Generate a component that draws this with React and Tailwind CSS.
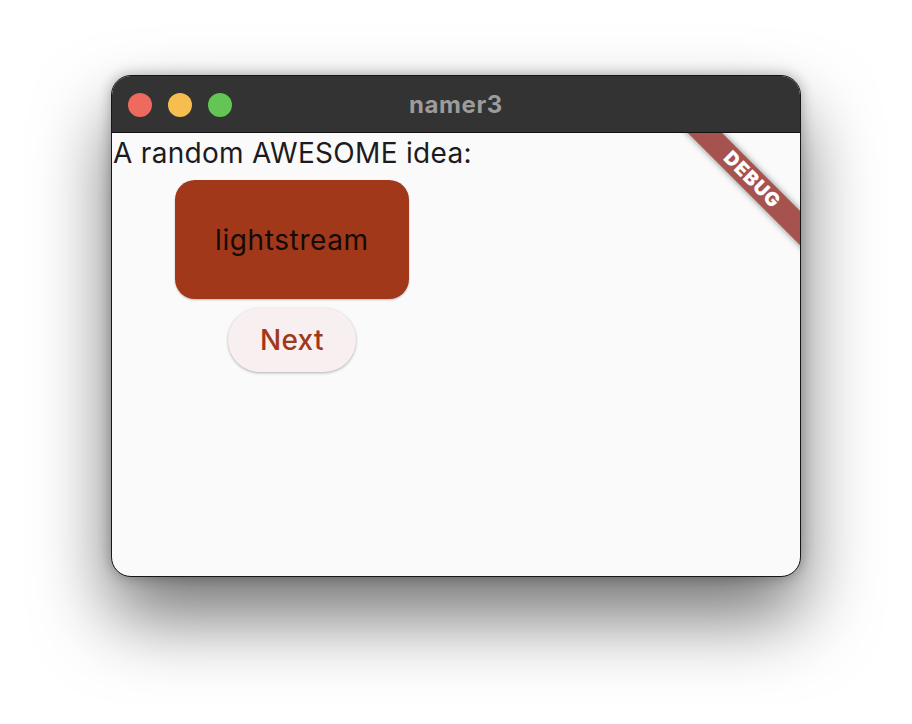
export default function App() {
  return (
    <div className="w-[912px] h-[724px] bg-white pt-[75px] pl-[111px] overflow-hidden" style={{ fontFamily: "Inter, 'Noto Sans', sans-serif" }}>
      <div className="w-[690px] h-[502px] rounded-[20px] border border-[#161616] bg-[#fafafa] overflow-hidden flex flex-col shadow-[0_40px_75px_rgba(0,0,0,0.55),0_0_14px_rgba(0,0,0,0.3)]">
        <div className="h-[57px] shrink-0 bg-[#333333] border-b border-[#111111] relative flex items-center">
          <div className="flex items-center gap-[16px] pl-[16px] pt-[1px]">
            <span className="w-[24px] h-[24px] rounded-full bg-[#ee6a5f]" />
            <span className="w-[24px] h-[24px] rounded-full bg-[#f5be4f]" />
            <span className="w-[24px] h-[24px] rounded-full bg-[#62c554]" />
          </div>
          <div className="absolute inset-0 flex items-center justify-center text-[24px] tracking-[0.6px] font-bold text-[#9c9c9c] pt-[1px]">namer3</div>
        </div>
        <div className="relative flex-1 overflow-hidden">
          <div className="flex flex-col items-center w-fit">
            <div className="text-[28px] leading-[40px] tracking-[0.3px] text-[#1c1b1f] pl-[1px]">A random AWESOME idea:</div>
            <div className="mt-[7px] w-[234px] h-[119px] rounded-[20px] bg-[#a2381a] flex items-center justify-center text-[28px] tracking-[0.6px] text-[#140a06] shadow-[0_1px_2px_rgba(0,0,0,0.25)]">lightstream</div>
            <div className="mt-[9px] w-[128px] h-[64px] rounded-full bg-[#f8eff1] flex items-center justify-center text-[28px] font-medium tracking-[0.3px] text-[#a2381a] shadow-[0_1px_3px_rgba(0,0,0,0.3)]">Next</div>
          </div>
          <div className="absolute top-[35px] right-[-52px] w-[200px] h-[24px] rotate-45 bg-[#a6524e] shadow-[0_0_6px_rgba(0,0,0,0.5)] flex items-center justify-center text-[19px] font-black text-white tracking-[1px]">DEBUG</div>
        </div>
      </div>
    </div>
  );
}
